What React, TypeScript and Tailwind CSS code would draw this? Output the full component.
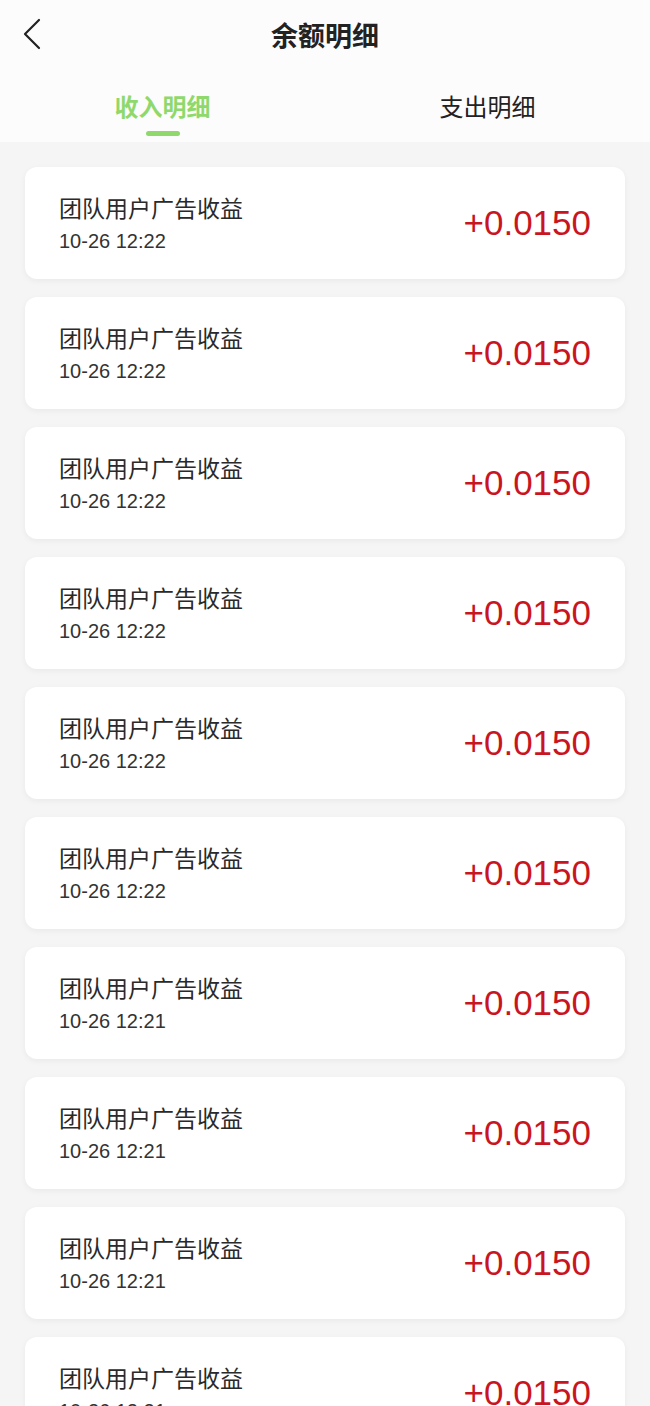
const records = [
  "10-26 12:22",
  "10-26 12:22",
  "10-26 12:22",
  "10-26 12:22",
  "10-26 12:22",
  "10-26 12:22",
  "10-26 12:21",
  "10-26 12:21",
  "10-26 12:21",
  "10-26 12:21",
];

const App = () => {
  return (
    <div className="min-h-[1406px] bg-[#f5f5f5] font-['Liberation_Sans','Noto_Sans_CJK_SC',sans-serif]">
      <div className="bg-[#fcfcfc] h-[142px] flex flex-col">
        <div className="relative h-[70px] flex items-center justify-center">
          <svg className="absolute left-[22px] top-[18px]" width="20" height="32" viewBox="0 0 20 32" fill="none">
            <path d="M17 2 L3 16 L17 30" stroke="#222" strokeWidth="2.2" strokeLinecap="round" strokeLinejoin="round" />
          </svg>
          <div className="text-[27px] font-bold text-[#222] font-['Noto_Sans_CJK_SC',sans-serif]">余额明细</div>
        </div>
        <div className="flex font-['Noto_Sans_CJK_SC',sans-serif]">
          <div className="flex-1 flex flex-col items-center pt-[21px]">
            <div className="text-[24px] leading-[30px] font-bold text-[#8fd96c]">收入明细</div>
            <div className="mt-[10px] w-[34px] h-[5px] rounded-full bg-[#8fd96c]"></div>
          </div>
          <div className="flex-1 flex flex-col items-center pt-[21px]">
            <div className="text-[24px] leading-[30px] text-[#222]">支出明细</div>
          </div>
        </div>
      </div>
      <div className="flex flex-col gap-[18px] px-[25px] pt-[25px]">
        {records.map((time, i) => (
          <div
            key={i}
            className="h-[112px] bg-white rounded-[12px] shadow-[0_2px_6px_rgba(0,0,0,0.05)] flex items-center justify-between pl-[34px] pr-[34px]"
          >
            <div className="flex flex-col">
              <div className="text-[23px] leading-[30px] text-[#2a2a2a] font-['Noto_Sans_CJK_SC',sans-serif]">团队用户广告收益</div>
              <div className="text-[20px] leading-[26px] mt-[6px] text-[#333]">{time}</div>
            </div>
            <div className="text-[35px] leading-[40px] text-[#c9151f]">+0.0150</div>
          </div>
        ))}
      </div>
    </div>
  );
};

export default App;
